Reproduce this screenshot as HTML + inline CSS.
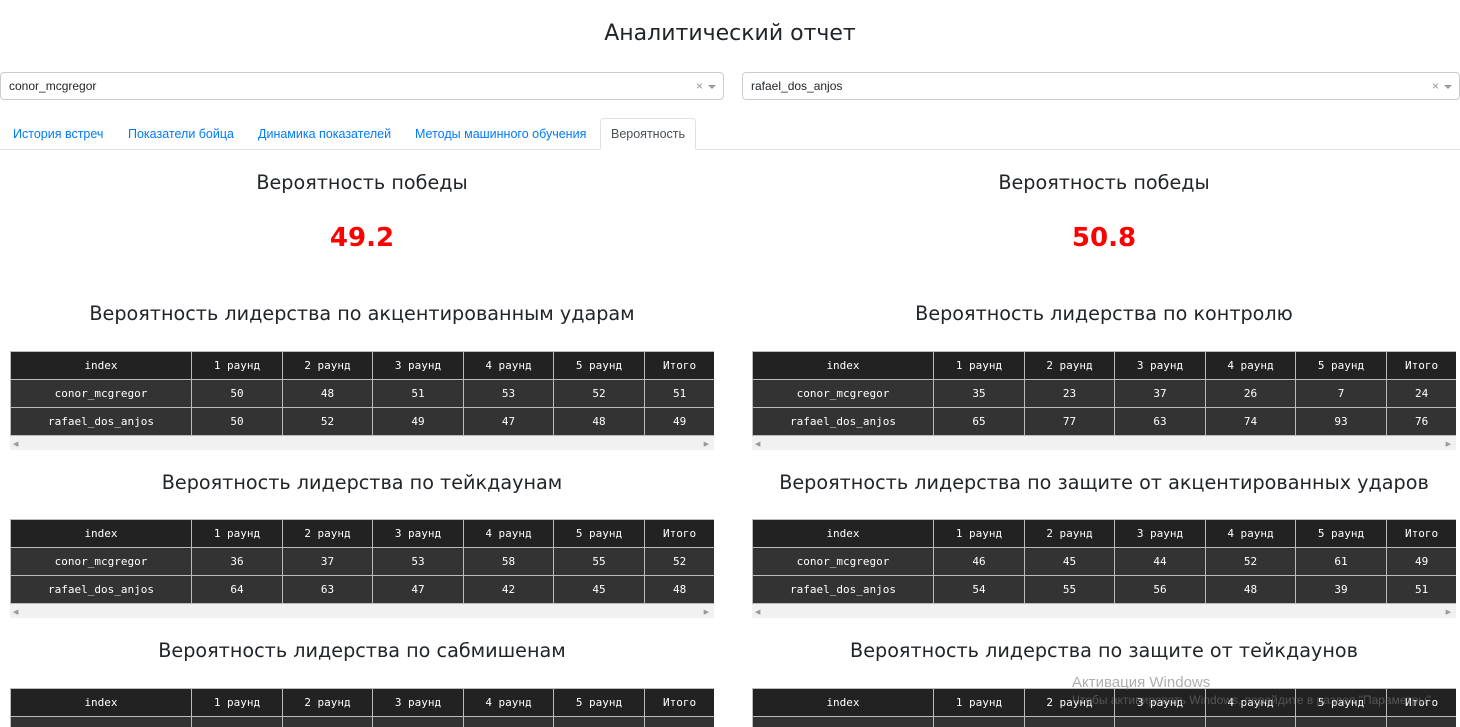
<!DOCTYPE html>
<html><head><meta charset="utf-8"><style>
html,body{margin:0;width:1460px;height:727px;overflow:hidden}
body{background:#fff;font-family:"DejaVu Sans","Liberation Sans",sans-serif;color:#212529;position:relative}
.a{position:absolute}
h1{position:absolute;margin:0;top:21px;left:0;width:1460px;text-align:center;font-size:22px;font-weight:500}
.sel{position:absolute;top:72px;border:1px solid #ccc;border-radius:4px;font-size:12px;line-height:26px;padding-left:8px;box-sizing:border-box;height:28px;font-family:"Liberation Sans",sans-serif}
.sel .x{position:absolute;right:20px;top:0;color:#999}
.sel .c{position:absolute;right:7px;top:12px;border:4px solid transparent;border-top:4px solid #999;border-bottom:0}
.tabs{position:absolute;top:149px;left:0;width:1460px;border-top:1px solid #dee2e6}
.tab{position:absolute;top:127px;font-size:12.5px;color:#007bff;font-family:"Liberation Sans",sans-serif}
.act{position:absolute;left:600px;top:118px;width:96px;height:32px;border:1px solid #dee2e6;border-bottom:1px solid #fff;border-radius:4px 4px 0 0;background:#fff;box-sizing:border-box;font-size:12.5px;color:#495057;text-align:center;line-height:31px;font-family:"Liberation Sans",sans-serif}
.t{position:absolute;width:730px;text-align:center;font-size:19.2px;font-weight:500}
.n{position:absolute;width:730px;text-align:center;font-size:26px;color:#f00;font-weight:bold}
.tw{position:absolute;width:704px;height:99px;background:#f1f1f1;overflow:hidden}
table{border-collapse:collapse;font-family:"DejaVu Sans Mono","Liberation Mono",monospace;font-size:11px;color:#fff;table-layout:fixed;width:780px}
td{border:1px solid #bbb;text-align:center;height:27px;padding:0;background:#333}
tr:first-child td{background:#222}
.sb{position:absolute;left:3px;bottom:2px;font-size:7px;color:#999}
.sb2{position:absolute;right:5px;bottom:2px;font-size:7px;color:#999}
</style></head><body>
<h1>Аналитический отчет</h1>
<div class="sel" style="left:0;width:724px">conor_mcgregor<span class="x">×</span><span class="c"></span></div>
<div class="sel" style="left:742px;width:718px">rafael_dos_anjos<span class="x">×</span><span class="c"></span></div>
<div class="tabs"></div>
<span class="tab" style="left:13px">История встреч</span>
<span class="tab" style="left:128px">Показатели бойца</span>
<span class="tab" style="left:258px">Динамика показателей</span>
<span class="tab" style="left:415px">Методы машинного обучения</span>
<div class="act">Вероятность</div>

<div class="t" style="left:-3px;top:171px">Вероятность победы</div>
<div class="t" style="left:739px;top:171px">Вероятность победы</div>
<div class="n" style="left:-3px;top:223px">49.2</div>
<div class="n" style="left:739px;top:223px">50.8</div>

<div class="t" style="left:-3px;top:302px">Вероятность лидерства по акцентированным ударам</div>
<div class="t" style="left:739px;top:302px">Вероятность лидерства по контролю</div>
<div class="t" style="left:-3px;top:471px">Вероятность лидерства по тейкдаунам</div>
<div class="t" style="left:739px;top:471px">Вероятность лидерства по защите от акцентированных ударов</div>
<div class="t" style="left:-3px;top:639px">Вероятность лидерства по сабмишенам</div>
<div class="t" style="left:739px;top:639px">Вероятность лидерства по защите от тейкдаунов</div>

<div class="tw" style="left:10px;top:351px"><table><colgroup><col style="width:181px"><col style="width:91px"><col style="width:90px"><col style="width:91px"><col style="width:90px"><col style="width:91px"><col style="width:146px"></colgroup>
<tr><td>index</td><td>1 раунд</td><td>2 раунд</td><td>3 раунд</td><td>4 раунд</td><td>5 раунд</td><td style="text-align:left;padding-left:18px">Итого</td></tr>
<tr><td>conor_mcgregor</td><td>50</td><td>48</td><td>51</td><td>53</td><td>52</td><td style="text-align:left;padding-left:28px">51</td></tr>
<tr><td>rafael_dos_anjos</td><td>50</td><td>52</td><td>49</td><td>47</td><td>48</td><td style="text-align:left;padding-left:28px">49</td></tr></table><span class="sb">◀</span><span class="sb2">▶</span></div>

<div class="tw" style="left:752px;top:351px"><table><colgroup><col style="width:181px"><col style="width:91px"><col style="width:90px"><col style="width:91px"><col style="width:90px"><col style="width:91px"><col style="width:146px"></colgroup>
<tr><td>index</td><td>1 раунд</td><td>2 раунд</td><td>3 раунд</td><td>4 раунд</td><td>5 раунд</td><td style="text-align:left;padding-left:18px">Итого</td></tr>
<tr><td>conor_mcgregor</td><td>35</td><td>23</td><td>37</td><td>26</td><td>7</td><td style="text-align:left;padding-left:28px">24</td></tr>
<tr><td>rafael_dos_anjos</td><td>65</td><td>77</td><td>63</td><td>74</td><td>93</td><td style="text-align:left;padding-left:28px">76</td></tr></table><span class="sb">◀</span><span class="sb2">▶</span></div>

<div class="tw" style="left:10px;top:519px"><table><colgroup><col style="width:181px"><col style="width:91px"><col style="width:90px"><col style="width:91px"><col style="width:90px"><col style="width:91px"><col style="width:146px"></colgroup>
<tr><td>index</td><td>1 раунд</td><td>2 раунд</td><td>3 раунд</td><td>4 раунд</td><td>5 раунд</td><td style="text-align:left;padding-left:18px">Итого</td></tr>
<tr><td>conor_mcgregor</td><td>36</td><td>37</td><td>53</td><td>58</td><td>55</td><td style="text-align:left;padding-left:28px">52</td></tr>
<tr><td>rafael_dos_anjos</td><td>64</td><td>63</td><td>47</td><td>42</td><td>45</td><td style="text-align:left;padding-left:28px">48</td></tr></table><span class="sb">◀</span><span class="sb2">▶</span></div>

<div class="tw" style="left:752px;top:519px"><table><colgroup><col style="width:181px"><col style="width:91px"><col style="width:90px"><col style="width:91px"><col style="width:90px"><col style="width:91px"><col style="width:146px"></colgroup>
<tr><td>index</td><td>1 раунд</td><td>2 раунд</td><td>3 раунд</td><td>4 раунд</td><td>5 раунд</td><td style="text-align:left;padding-left:18px">Итого</td></tr>
<tr><td>conor_mcgregor</td><td>46</td><td>45</td><td>44</td><td>52</td><td>61</td><td style="text-align:left;padding-left:28px">49</td></tr>
<tr><td>rafael_dos_anjos</td><td>54</td><td>55</td><td>56</td><td>48</td><td>39</td><td style="text-align:left;padding-left:28px">51</td></tr></table><span class="sb">◀</span><span class="sb2">▶</span></div>

<div class="tw" style="left:10px;top:688px;height:39px"><table><colgroup><col style="width:181px"><col style="width:91px"><col style="width:90px"><col style="width:91px"><col style="width:90px"><col style="width:91px"><col style="width:146px"></colgroup>
<tr><td>index</td><td>1 раунд</td><td>2 раунд</td><td>3 раунд</td><td>4 раунд</td><td>5 раунд</td><td style="text-align:left;padding-left:18px">Итого</td></tr>
<tr><td></td><td></td><td></td><td></td><td></td><td></td><td></td></tr></table></div>

<div class="tw" style="left:752px;top:688px;height:39px"><table><colgroup><col style="width:181px"><col style="width:91px"><col style="width:90px"><col style="width:91px"><col style="width:90px"><col style="width:91px"><col style="width:146px"></colgroup>
<tr><td>index</td><td>1 раунд</td><td>2 раунд</td><td>3 раунд</td><td>4 раунд</td><td>5 раунд</td><td style="text-align:left;padding-left:18px">Итого</td></tr>
<tr><td></td><td></td><td></td><td></td><td></td><td></td><td></td></tr></table></div>

<div class="a" style="left:1072px;top:674px;font-size:15px;color:rgba(120,120,120,.6);font-family:'Liberation Sans',sans-serif">Активация Windows</div>
<div class="a" style="left:1072px;top:693px;font-size:12px;color:rgba(120,120,120,.6);font-family:'Liberation Sans',sans-serif">Чтобы активировать Windows, перейдите в раздел "Параметры".</div>
</body></html>
